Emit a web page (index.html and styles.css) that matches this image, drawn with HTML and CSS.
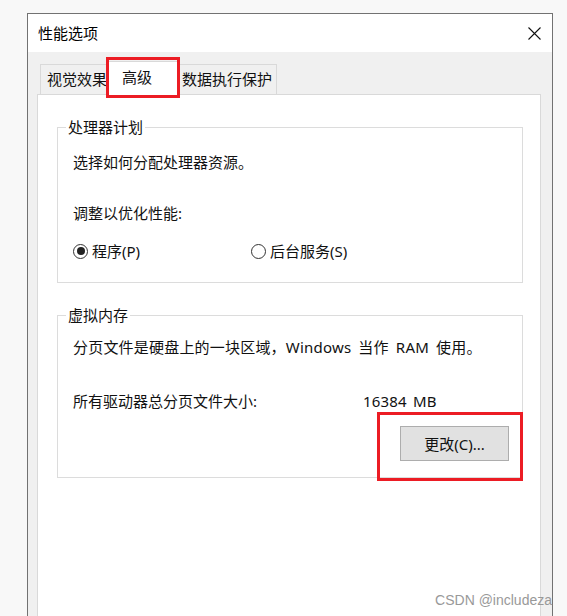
FILE: index.html
```html
<!DOCTYPE html>
<html lang="zh-CN">
<head>
<meta charset="utf-8">
<title>性能选项</title>
<link rel="stylesheet" href="styles.css">
</head>
<body>
<div class="window">
  <div class="titlebar">
    <span class="title">性能选项</span>
    <svg class="close" width="13" height="13" viewBox="0 0 13 13"><path d="M0.5 0.5L12.5 12.5M12.5 0.5L0.5 12.5" stroke="#111" stroke-width="1.1" fill="none"/></svg>
  </div>
  <div class="client">
    <div class="tabs">
      <div class="tab t1">视觉效果</div>
      <div class="tab active">高级</div>
      <div class="tab t3">数据执行保护</div>
    </div>
    <div class="panel">
      <fieldset class="group g1">
        <legend>处理器计划</legend>
        <div class="gbody">
          <p class="line l-first">选择如何分配处理器资源。</p>
          <p class="line l-second">调整以优化性能:</p>
          <div class="radios">
            <label class="radio r1"><span class="dot checked"></span>程序(P)</label>
            <label class="radio"><span class="dot"></span>后台服务(S)</label>
          </div>
        </div>
      </fieldset>
      <fieldset class="group g2">
        <legend>虚拟内存</legend>
        <div class="gbody">
          <p class="line l-first2">分页文件是硬盘上的一块区域，Windows 当作 RAM 使用。</p>
          <div class="line size-row"><span class="size-label">所有驱动器总分页文件大小:</span><span class="size-value">16384 MB</span></div>
          <div class="btn-row"><button class="btn">更改(C)...</button></div>
        </div>
      </fieldset>
    </div>
  </div>
</div>
<div class="mark mark-tab"></div>
<div class="mark mark-btn"></div>
<div class="watermark">CSDN @includeza</div>
</body>
</html>
```
FILE: styles.css
```css
html { overflow: hidden; }
body {
  margin: 0;
  background: #f8f8f8;
  font-family: "Noto Sans", "Noto Sans CJK SC", sans-serif;
  font-size: 15px;
  line-height: 20px;
  color: #111;
  position: relative;
  height: 616px;
}
.window {
  margin: 13px 0 0 27px;
  width: 526px;
  box-sizing: border-box;
  border: 1px solid #727272;
  border-bottom: none;
  background: #f0f0f0;
}
.titlebar {
  height: 38px;
  background: #fff;
  display: flex;
  align-items: center;
  justify-content: space-between;
  padding: 0 11px 0 10px;
}
.title { color: #000; }
.close { display: block; }
.client {
  padding: 9px 11px 0 9px;
  background: #f0f0f0;
}
.tabs {
  display: flex;
  align-items: flex-end;
  padding-left: 3px;
  position: relative;
  z-index: 1;
  margin-bottom: -1px;
}
.tab {
  box-sizing: border-box;
  height: 30px;
  border: 1px solid #d9d9d9;
  border-bottom: none;
  background: #f0f0f0;
  line-height: 28px;
  margin-bottom: 1px;
  white-space: nowrap;
}
.t1 { width: 69px; padding-left: 6px; }
.t3 { width: 100px; padding-left: 4px; }
.tab.active {
  width: 72px;
  height: 34px;
  margin: 0 -2px;
  padding-left: 14px;
  line-height: 30px;
  background: #fff;
  position: relative;
  z-index: 2;
}
.panel {
  background: #fff;
  border: 1px solid #d9d9d9;
  height: 560px;
  padding: 22px 17px 0 19px;
}
.group {
  margin: 0;
  padding: 0;
  width: 466px;
  box-sizing: border-box;
  border: 1px solid #dcdcdc;
  min-inline-size: 0;
}
.group legend {
  margin-left: 8px;
  padding: 0 2px;
  line-height: 20px;
}
.g1 { padding-bottom: 21px; }
.g2 { margin-top: 22px; padding-bottom: 16px; }
.gbody { padding-left: 15px; }
.line { margin: 0; height: 20px; white-space: nowrap; }
.l-first { margin-top: 15px; }
.l-second { margin-top: 31px; }
.l-first2 { margin-top: 12px; word-spacing: 3px; letter-spacing: 0.2px; }
.radios {
  margin-top: 18px;
  display: flex;
  align-items: center;
  height: 20px;
}
.radio {
  display: flex;
  align-items: center;
  gap: 4px;
  white-space: nowrap;
}
.r1 { width: 178px; margin-left: 0; }
.dot {
  box-sizing: border-box;
  width: 15px;
  height: 15px;
  border: 1px solid #333;
  border-radius: 50%;
  background: #fff;
  display: flex;
  align-items: center;
  justify-content: center;
}
.dot.checked::after {
  content: "";
  width: 8px;
  height: 8px;
  border-radius: 50%;
  background: #222;
}
.size-row {
  margin-top: 34px;
  display: flex;
}
.size-label { width: 290px; }
.size-value { word-spacing: 2px; letter-spacing: 0.2px; }
.btn-row {
  margin-top: 15px;
  display: flex;
  justify-content: flex-end;
  padding-right: 13px;
}
.btn {
  width: 109px;
  height: 35px;
  background: #e1e1e1;
  border: 1px solid #adadad;
  font: inherit;
  color: #111;
  padding: 0;
}
.mark {
  position: absolute;
  z-index: 5;
  box-sizing: border-box;
  border: 3px solid #ec1c24;
}
.mark-tab { left: 106px; top: 57px; width: 74px; height: 41px; }
.mark-btn { left: 377px; top: 412px; width: 146px; height: 69px; }
.watermark {
  position: absolute;
  z-index: 6;
  right: 15px;
  top: 592px;
  font-family: "Liberation Sans", Arial, sans-serif;
  font-size: 14px;
  line-height: 16px;
  color: #999;
  white-space: nowrap;
}
```
